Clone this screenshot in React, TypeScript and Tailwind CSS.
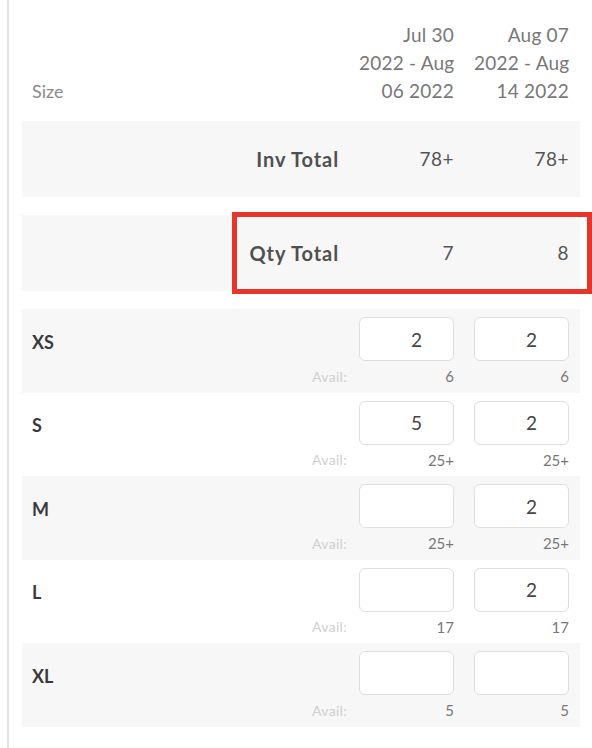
import React from 'react'

const DATES = [
  ['Jul 30', '2022 - Aug', '06 2022'],
  ['Aug 07', '2022 - Aug', '14 2022'],
]

const SIZES = [
  { size: 'XS', qty: ['2', '2'], avail: ['6', '6'] },
  { size: 'S', qty: ['5', '2'], avail: ['25+', '25+'] },
  { size: 'M', qty: ['', '2'], avail: ['25+', '25+'] },
  { size: 'L', qty: ['', '2'], avail: ['17', '17'] },
  { size: 'XL', qty: ['', ''], avail: ['5', '5'] },
]

function TotalRow({ label, values, highlight }: { label: string; values: string[]; highlight?: boolean }) {
  return (
    <div className="relative flex h-[76px] items-center bg-[#f7f7f7] pl-[10px] pr-[11px]">
      <div className="flex-1 pr-[20px] text-right text-[20px] font-bold tracking-[0.9px] text-[#505050]">{label}</div>
      <div className="flex gap-[20px]">
        {values.map((v, i) => (
          <div key={i} className="w-[95px] text-right text-[19px] tracking-[0.5px] text-[#555]">{v}</div>
        ))}
      </div>
      {highlight && (
        <div className="pointer-events-none absolute left-[210px] -right-[12px] -top-[3px] -bottom-[3px] border-[5px] border-[#e8352b]" />
      )}
    </div>
  )
}

export default function App() {
  return (
    <div className="min-h-screen w-full bg-white" style={{ fontFamily: 'Lato, "Open Sans", sans-serif' }}>
      <div className="ml-[7px] min-h-screen border-l-2 border-[#e2e2e2] pl-[13px] pr-[12px]">
        {/* header */}
        <div className="flex items-end pl-[10px] pr-[11px] pt-[21px] pb-[16px]">
          <div className="flex-1 text-[18px] leading-[28px] text-[#8a8a8a]">Size</div>
          <div className="flex gap-[20px]">
            {DATES.map(lines => (
              <div key={lines[0]} className="w-[95px] text-right text-[19px] leading-[28px] tracking-[0.2px] text-[#777]">
                {lines.map(l => (
                  <div key={l} className="whitespace-nowrap">{l}</div>
                ))}
              </div>
            ))}
          </div>
        </div>

        <TotalRow label="Inv Total" values={['78+', '78+']} />
        <div className="h-[18px]" />
        <TotalRow label="Qty Total" values={['7', '8']} highlight />
        <div className="h-[18px]" />

        {SIZES.map((s, idx) => (
          <div
            key={s.size}
            className={`flex h-[83.5px] pl-[10px] pr-[11px] pt-[8px] ${idx % 2 === 0 ? 'bg-[#f7f7f7]' : 'bg-white'}`}
          >
            <div className="flex flex-1 flex-col pr-[12px]">
              <div className="flex flex-1 items-center text-[18px] font-bold text-[#3a3a3a]">{s.size}</div>
              <div className="mb-[7px] text-right text-[14px] leading-[18px] tracking-[0.3px] text-[#cfcfcf]">Avail:</div>
            </div>
            <div className="flex gap-[20px]">
              {s.qty.map((q, i) => (
                <div key={i} className="flex w-[95px] flex-col">
                  <input
                    readOnly
                    value={q}
                    className="h-[44px] w-full rounded-[6px] border border-[#dedede] bg-white pl-[12px] pr-[31px] text-right text-[19px] text-[#444] outline-none"
                  />
                  <div className="mt-[6px] text-right text-[15px] leading-[18px] text-[#777]">{s.avail[i]}</div>
                </div>
              ))}
            </div>
          </div>
        ))}
      </div>
    </div>
  )
}
